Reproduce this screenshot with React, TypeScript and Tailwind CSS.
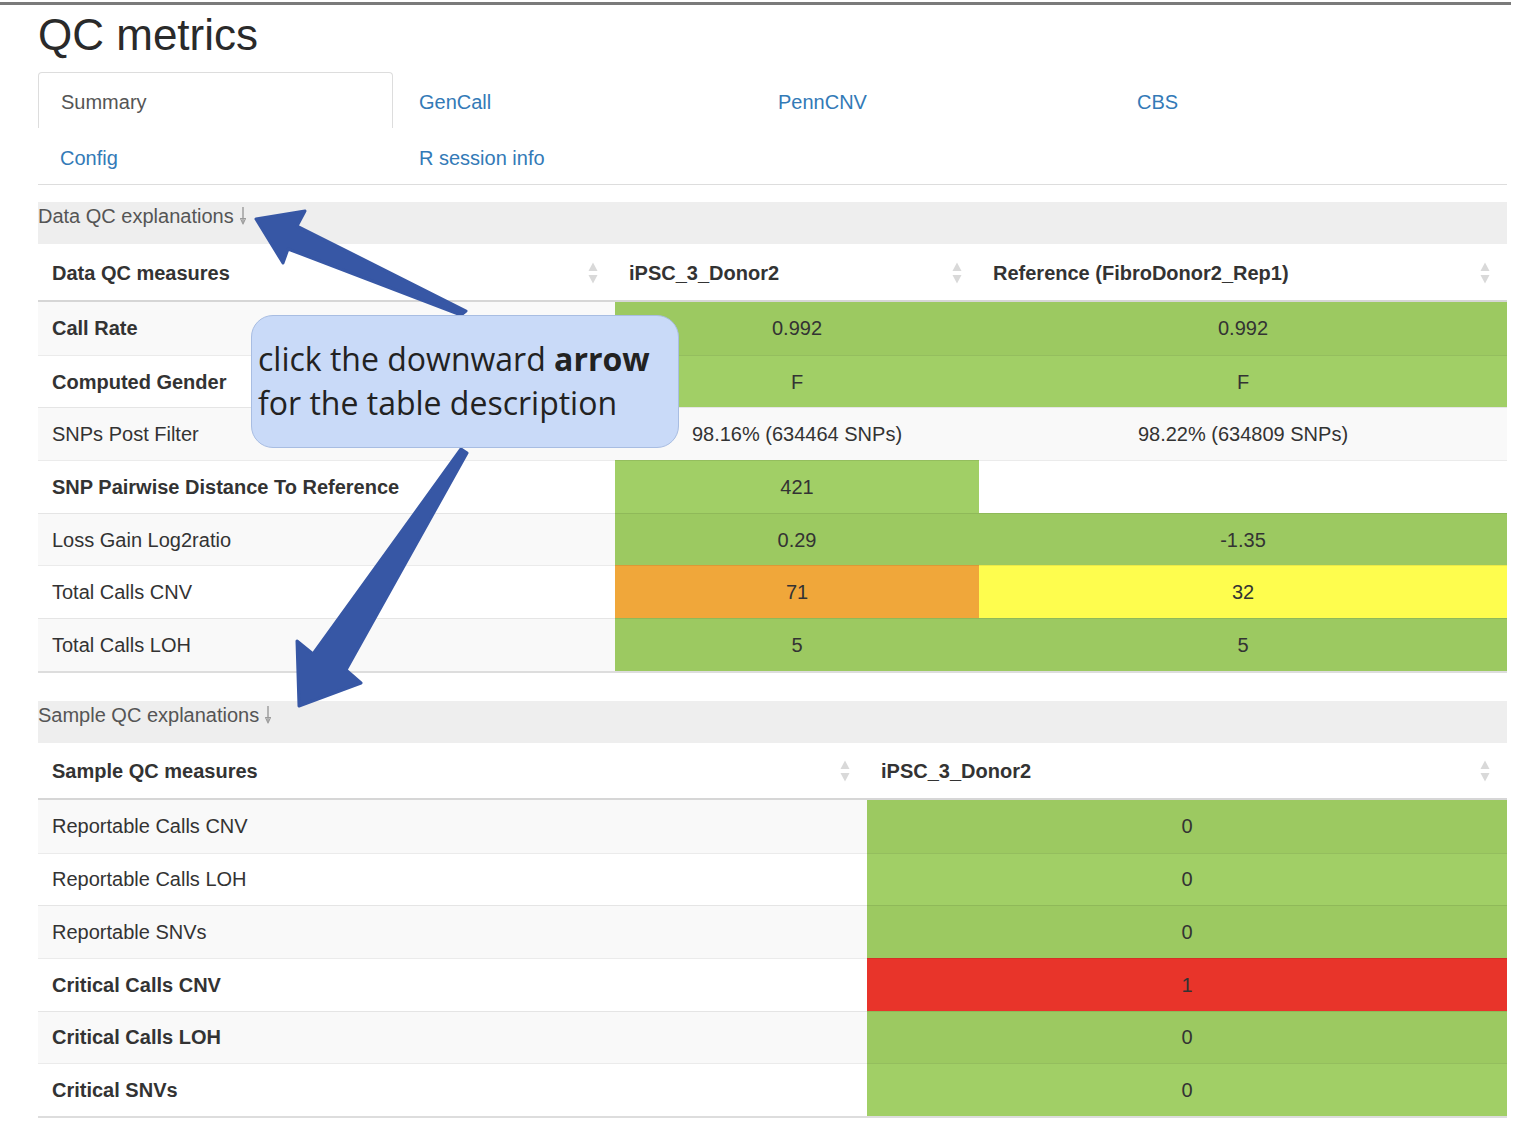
import React from "react";

type Cell = { text: string; bg?: string };
type Row = { label: string; bold?: boolean; cells: Cell[] };

const G1 = "bg-[#9cc961]"; // green on striped rows
const G2 = "bg-[#a1cf66]"; // green on white rows

const dataRows: Row[] = [
  { label: "Call Rate", bold: true, cells: [{ text: "0.992", bg: G1 }, { text: "0.992", bg: G1 }] },
  { label: "Computed Gender", bold: true, cells: [{ text: "F", bg: G2 }, { text: "F", bg: G2 }] },
  { label: "SNPs Post Filter", cells: [{ text: "98.16% (634464 SNPs)" }, { text: "98.22% (634809 SNPs)" }] },
  { label: "SNP Pairwise Distance To Reference", bold: true, cells: [{ text: "421", bg: G2 }, { text: "" }] },
  { label: "Loss Gain Log2ratio", cells: [{ text: "0.29", bg: G1 }, { text: "-1.35", bg: G1 }] },
  { label: "Total Calls CNV", cells: [{ text: "71", bg: "bg-[#f0a73a]" }, { text: "32", bg: "bg-[#fefd4e]" }] },
  { label: "Total Calls LOH", cells: [{ text: "5", bg: G1 }, { text: "5", bg: G1 }] },
];

const sampleRows: Row[] = [
  { label: "Reportable Calls CNV", cells: [{ text: "0", bg: G1 }] },
  { label: "Reportable Calls LOH", cells: [{ text: "0", bg: G2 }] },
  { label: "Reportable SNVs", cells: [{ text: "0", bg: G1 }] },
  { label: "Critical Calls CNV", bold: true, cells: [{ text: "1", bg: "bg-[#e8342a]" }] },
  { label: "Critical Calls LOH", bold: true, cells: [{ text: "0", bg: G1 }] },
  { label: "Critical SNVs", bold: true, cells: [{ text: "0", bg: G2 }] },
];

function SortBoth() {
  return (
    <svg width="10" height="26" viewBox="0 0 10 26" className="shrink-0">
      <path d="M5 2.5L0.5 11h9z" fill="#d9d9d9" />
      <path d="M0.5 15h9L5 23.5z" fill="#d9d9d9" />
    </svg>
  );
}

function DownHint() {
  return (
    <svg width="8" height="20" viewBox="0 0 8 20" className="ml-[5px] inline-block align-[-3px]">
      <path d="M4 1v15" stroke="#9a9a9a" strokeWidth="1.4" />
      <path d="M1.5 12.5L4 18l2.5-5.5z" fill="none" stroke="#9a9a9a" strokeWidth="1.1" strokeLinejoin="round" />
    </svg>
  );
}

function QcTable({ title, headers, rows, cols, rowH, headH }: { title: string; headers: string[]; rows: Row[]; cols: string; rowH: string; headH: string }) {
  return (
    <div>
      <div className="h-[42px] bg-[#eeeeee] pt-[2px] text-[20px] leading-[24px] text-[#555]">
        {title}
        <DownHint />
      </div>
      <div className={`grid ${cols} ${headH} border-b-2 border-[#d6d6d6]`}>
        {headers.map(h => (
          <div key={h} className="flex items-center justify-between pl-[14px] pr-[17px] pt-[1px] font-bold text-[20px]">
            <span>{h}</span>
            <SortBoth />
          </div>
        ))}
      </div>
      <div className="border-b-2 border-[#dddddd]">
        {rows.map((r, i) => (
          <div key={r.label} className={`grid ${cols} ${rowH} ${i % 2 === 0 ? "bg-[#f9f9f9]" : "bg-white"}`}>
            <div className={`flex items-center pl-[14px] text-[20px] ${i > 0 ? "border-t border-black/[0.08]" : ""} ${r.bold ? "font-bold" : ""}`}>
              {r.label}
            </div>
            {r.cells.map((c, j) => (
              <div key={j} className={`flex items-center justify-center text-[20px] ${i > 0 ? "border-t border-black/[0.08]" : ""} ${c.bg ?? ""}`}>
                {c.text}
              </div>
            ))}
          </div>
        ))}
      </div>
    </div>
  );
}

export default function App() {
  const tabs = [
    { label: "Summary", active: true },
    { label: "GenCall" },
    { label: "PennCNV" },
    { label: "CBS" },
    { label: "Config" },
    { label: "R session info" },
  ];

  return (
    <div className="relative min-h-[1126px] w-[1514px] bg-white font-['Liberation_Sans',Arial,sans-serif] text-[#333]">
      <div className="mt-[2px] h-[3px] w-[1511px] bg-[#7a7a7a]" />

      <div className="pl-[38px] w-[1507px]">
        <h1 className="mt-[6px] text-[44px] leading-[48px] text-[#2a2a2a]">QC metrics</h1>

        {/* tabs */}
        <div className="mt-[13px] grid grid-cols-[355px_355px_355px_355px] gap-x-[4px] border-b border-[#dddddd]">
          {tabs.map(t => (
            <div
              key={t.label}
              className={`flex h-[56px] items-center pt-[3px] px-[22px] text-[20px] ${t.active ? "rounded-t-[4px] border border-b-0 border-[#dddddd] text-[#555]" : "text-[#337ab7]"}`}
            >
              {t.label}
            </div>
          ))}
        </div>

        <div className="mt-[17px]">
          <QcTable
            title="Data QC explanations"
            headers={["Data QC measures", "iPSC_3_Donor2", "Reference (FibroDonor2_Rep1)"]}
            rows={dataRows}
            cols="grid-cols-[577px_364px_528px]"
            rowH="h-[52.7px]"
            headH="h-[58px]"
          />
        </div>

        <div className="mt-[28px]">
          <QcTable
            title="Sample QC explanations"
            headers={["Sample QC measures", "iPSC_3_Donor2"]}
            rows={sampleRows}
            cols="grid-cols-[829px_640px]"
            rowH="h-[52.7px]"
            headH="h-[57px]"
          />
        </div>
      </div>

      {/* annotation overlay */}
      <svg className="pointer-events-none absolute left-0 top-0" width="1514" height="1126">
        <path
          d="M256 217L305 209L297 224L466 309L461 313L288 247L283 261Z"
          fill="#3757a5"
          stroke="#3757a5"
          strokeWidth="3"
          strokeLinejoin="round"
        />
        <path
          d="M467 451L346 668L361 681L299 704L297 639L313 652L461 447Z"
          fill="#3757a5"
          stroke="#3757a5"
          strokeWidth="3"
          strokeLinejoin="round"
        />
      </svg>
      <div className="absolute left-[251px] top-[313px] flex h-[133px] w-[428px] items-center rounded-[22px] border border-[#a8bde2] bg-[#c9daf8] pl-[6px] pb-[2px] font-['Open_Sans','Noto_Sans',sans-serif] text-[32px] leading-[44px] text-[#222]">
        <div>
          click the downward <b>arrow</b>
          <br />
          for the table description
        </div>
      </div>
    </div>
  );
}
